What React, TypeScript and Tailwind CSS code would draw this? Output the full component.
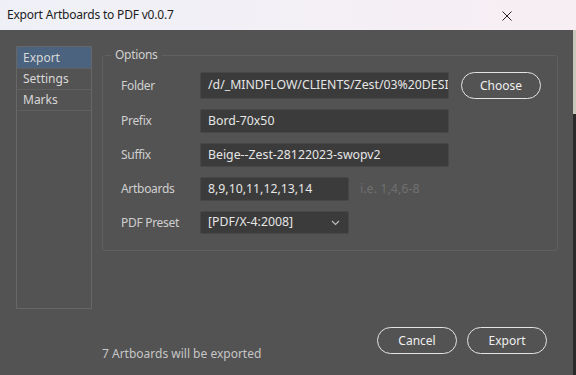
const font = { fontFamily: '"Noto Sans", "Open Sans", sans-serif' };

const FieldRow = ({
  label,
  children,
}: {
  label: string;
  children: React.ReactNode;
}) => (
  <div className="flex items-center">
    <div className="w-[79px] shrink-0 text-[12px] tracking-[-0.3px] text-[#cfcfcf]">
      {label}
    </div>
    {children}
  </div>
);

const TextBox = ({ value, className }: { value: string; className: string }) => (
  <div
    className={`${className} flex items-center px-[7px] bg-[#3b3b3b] border border-[#474747] rounded-[2px] text-[12.3px] text-[#e6e6e6] whitespace-nowrap overflow-hidden`}
  >
    {value}
  </div>
);

const PillButton = ({ label }: { label: string }) => (
  <button className="w-[80px] h-[27px] rounded-full border border-[#e4e4e4] text-[12px] text-[#f0f0f0] flex items-center justify-center">
    {label}
  </button>
);

export default function App() {
  return (
    <div
      className="w-[576px] h-[375px] bg-[#535353] flex flex-col overflow-hidden"
      style={font}
    >
      <div className="h-[30px] shrink-0 flex items-center justify-between pl-[7px] pr-[64px] bg-gradient-to-r from-[#eff0f7] via-[#f3f0f6] to-[#f7eef3]">
        <span className="text-[12px] text-[#1c1c1c] tracking-[-0.2px]">
          Export Artboards to PDF v0.0.7
        </span>
        <svg width="10" height="10" viewBox="0 0 10 10" className="mt-[1px]">
          <path d="M0.5 0.5L9.5 9.5M9.5 0.5L0.5 9.5" stroke="#222" strokeWidth="1" />
        </svg>
      </div>

      <div className="flex-1 flex">
        <div className="flex-1 flex">
          {/* side navigation */}
          <div className="ml-[16px] mt-[16px] w-[76px] h-[263px] border border-[#676767] flex flex-col text-[12px] text-[#d8d8d8]">
            <div className="h-[22px] pl-[6px] flex items-center bg-[#4b637e] border-b border-[#5f5f5f]">
              Export
            </div>
            <div className="h-[21px] pl-[6px] flex items-center border-b border-[#5f5f5f]">
              Settings
            </div>
            <div className="h-[21px] pl-[6px] flex items-center border-b border-[#5f5f5f]">
              Marks
            </div>
          </div>

          <div className="flex-1 ml-[10px] mr-[15px] flex flex-col">
            <fieldset className="mt-[16px] border border-[#606060] rounded-[3px] pl-[8px] pr-[8px] pt-[8px] pb-[16px]">
              <legend className="px-[4px] text-[12px] tracking-[-0.3px] text-[#cfcfcf] leading-[18px]">
                Options
              </legend>
              <div className="pl-[10px] flex flex-col gap-[10px]">
                <FieldRow label="Folder">
                  <TextBox
                    value="/d/_MINDFLOW/CLIENTS/Zest/03%20DESIGN"
                    className="w-[249px] h-[27px]"
                  />
                  <div className="ml-[12px]">
                    <PillButton label="Choose" />
                  </div>
                </FieldRow>
                <FieldRow label="Prefix">
                  <TextBox value="Bord-70x50" className="w-[249px] h-[24px]" />
                </FieldRow>
                <FieldRow label="Suffix">
                  <TextBox
                    value="Beige--Zest-28122023-swopv2"
                    className="w-[249px] h-[24px]"
                  />
                </FieldRow>
                <FieldRow label="Artboards">
                  <TextBox value="8,9,10,11,12,13,14" className="w-[149px] h-[24px]" />
                  <span className="ml-[11px] text-[12.5px] text-[#707070]">
                    i.e. 1,4,6-8
                  </span>
                </FieldRow>
                <FieldRow label="PDF Preset">
                  <div className="w-[149px] h-[23px] flex items-center justify-between pl-[7px] pr-[8px] bg-[#3b3b3b] border border-[#474747] rounded-[2px] text-[12.3px] text-[#e6e6e6]">
                    <span>[PDF/X-4:2008]</span>
                    <svg width="9" height="6" viewBox="0 0 9 6">
                      <path d="M1 1L4.5 4.5L8 1" fill="none" stroke="#bdbdbd" strokeWidth="1.2" />
                    </svg>
                  </div>
                </FieldRow>
              </div>
            </fieldset>

            <div className="flex-1" />

            <div className="flex justify-between pr-[11px] pb-[21px]">
              <span className="self-end mb-[-8px] leading-[16px] text-[12px] text-[#c6c6c6]">
                7 Artboards will be exported
              </span>
              <div className="flex gap-[10px]">
                <PillButton label="Cancel" />
                <PillButton label="Export" />
              </div>
            </div>
          </div>
        </div>

        {/* window edge / scrollbar peeking */}
        <div className="w-[3px] flex flex-col">
          <div className="h-[84px] bg-[#c9c8bc]" />
          <div className="flex-1 bg-[#2a2a2a]" />
        </div>
      </div>
    </div>
  );
}
